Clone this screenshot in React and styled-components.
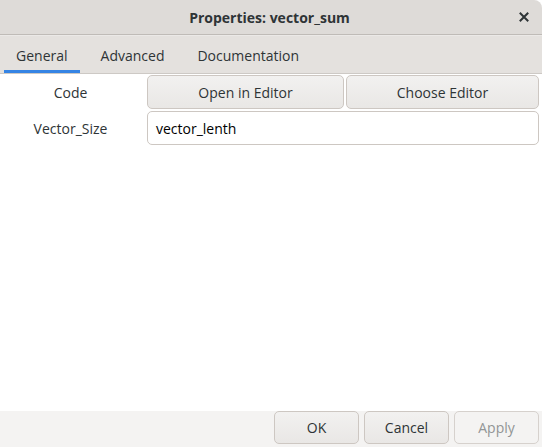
import React from "react";
import styled, { createGlobalStyle } from "styled-components";

const GlobalStyle = createGlobalStyle`
  html, body {
    margin: 0;
    padding: 0;
    background: #ffffff;
  }
  body {
    font-family: "Open Sans", "Noto Sans", sans-serif;
    font-size: 14px;
    color: #2e3436;
  }
`;

function CloseIcon() {
  return (
    <svg width="10" height="10" viewBox="0 0 10 10">
      <path d="M1.5 1.5 L8.5 8.5 M8.5 1.5 L1.5 8.5" stroke="#2e3436" strokeWidth="2" strokeLinecap="square" />
    </svg>
  );
}

function App() {
  const tabs = ["General", "Advanced", "Documentation"];

  return (
    <Window>
      <GlobalStyle />
      <TitleBar>
        <Title>Properties: vector_sum</Title>
        <CloseButton>
          <CloseIcon />
        </CloseButton>
      </TitleBar>

      <TabBar>
        {tabs.map((t, i) => (
          <Tab key={t} $active={i === 0}>
            {t}
          </Tab>
        ))}
      </TabBar>

      <Content>
        <FormGrid>
          <Label>Code</Label>
          <ButtonPair>
            <Button>Open in Editor</Button>
            <Button>Choose Editor</Button>
          </ButtonPair>

          <Label>Vector_Size</Label>
          <Entry>vector_lenth</Entry>
        </FormGrid>
      </Content>

      <ActionBar>
        <ActionButton>OK</ActionButton>
        <ActionButton>Cancel</ActionButton>
        <ActionButton $disabled>Apply</ActionButton>
      </ActionBar>
    </Window>
  );
}

const Window = styled.div`
  width: 542px;
  height: 447px;
  display: flex;
  flex-direction: column;
  background: #ffffff;
  overflow: hidden;
`;

const TitleBar = styled.div`
  position: relative;
  height: 35px;
  flex: 0 0 35px;
  display: flex;
  align-items: center;
  justify-content: center;
  background: #dedbd8;
  border-bottom: 1px solid #bfbbb7;
  border-top-right-radius: 8px;
  box-sizing: border-box;
`;

const Title = styled.div`
  font-weight: 700;
  font-size: 14px;
  color: #2e3436;
  margin-left: -3px;
`;

const CloseButton = styled.div`
  position: absolute;
  right: 13px;
  top: 12px;
  width: 10px;
  height: 10px;
  display: flex;
`;

const TabBar = styled.div`
  height: 39px;
  flex: 0 0 39px;
  display: flex;
  align-items: stretch;
  gap: 9px;
  padding-left: 4px;
  background: #e4e1de;
  border-top: 1px solid #ebe9e7;
  border-bottom: 1px solid #cdc9c5;
  box-sizing: border-box;
`;

const Tab = styled.div`
  display: flex;
  align-items: center;
  padding: 5px 12px 0;
  font-size: 14px;
  color: #2e3436;
  box-sizing: border-box;
  border-bottom: 3px solid ${(p) => (p.$active ? "#3584e4" : "transparent")};
`;

const Content = styled.div`
  flex: 1;
  padding: 1px 3px 0 0;
  background: #ffffff;
`;

const FormGrid = styled.div`
  display: grid;
  grid-template-columns: 141px 1fr;
  column-gap: 6px;
  row-gap: 2px;
  align-items: center;
`;

const Label = styled.div`
  text-align: center;
  font-size: 14px;
  color: #2e3436;
`;

const ButtonPair = styled.div`
  display: grid;
  grid-template-columns: 197px 1fr;
  gap: 2px;
`;

const Button = styled.div`
  height: 34px;
  display: flex;
  align-items: center;
  justify-content: center;
  border: 1px solid #cdc7c2;
  border-radius: 5px;
  background: linear-gradient(#f2f1f0, #e9e7e5);
  box-sizing: border-box;
  font-size: 14px;
  color: #2e3436;
`;

const Entry = styled.div`
  height: 34px;
  display: flex;
  align-items: center;
  padding-left: 8px;
  border: 1px solid #cdc7c2;
  border-radius: 5px;
  background: #ffffff;
  box-sizing: border-box;
  font-size: 14px;
  color: #000000;
`;

const ActionBar = styled.div`
  height: 36px;
  flex: 0 0 36px;
  display: flex;
  justify-content: flex-end;
  gap: 5px;
  padding: 0 3px 3px 0;
  background: #f4f3f2;
  box-sizing: border-box;
`;

const ActionButton = styled.div`
  width: 85px;
  height: 33px;
  display: flex;
  align-items: center;
  justify-content: center;
  border: 1px solid ${(p) => (p.$disabled ? "#d6d1cd" : "#cdc7c2")};
  border-radius: 5px;
  background: ${(p) =>
    p.$disabled ? "#f4f3f2" : "linear-gradient(#f2f1f0, #e9e7e5)"};
  box-sizing: border-box;
  font-size: 14px;
  color: ${(p) => (p.$disabled ? "#929595" : "#2e3436")};
`;

export default App;
